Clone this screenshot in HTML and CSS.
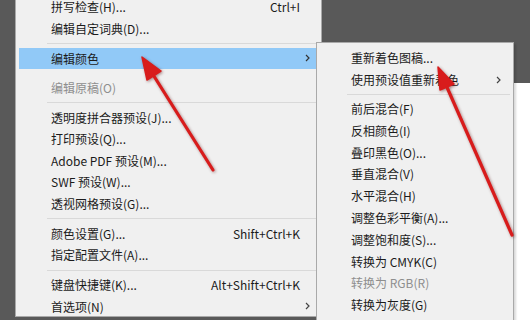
FILE: index.html
```html
<!DOCTYPE html>
<html lang="zh-CN">
<head>
    <meta charset="utf-8">
    <title>编辑菜单</title>
    <link rel="stylesheet" href="styles.css">
</head>
<body>
    <div class="desk">
        <div class="gutter"></div>

        <ul class="menu">
            <li class="item"><span class="label">拼写检查(H)...</span><span class="keys">Ctrl+I</span><span class="more"></span></li>
            <li class="item"><span class="label">编辑自定词典(D)...</span><span class="keys"></span><span class="more"></span></li>
            <li class="sep"></li>
            <li class="item valgt"><span class="label">编辑颜色</span><span class="keys"></span><span class="more"><svg width="5" height="8" viewBox="0 0 5 8"><path d="M1 1l3 3-3 3" fill="none" stroke="#333" stroke-width="1.2"/></svg></span></li>
            <li class="item off gap"><span class="label">编辑原稿(O)</span><span class="keys"></span><span class="more"></span></li>
            <li class="sep"></li>
            <li class="item"><span class="label">透明度拼合器预设(J)...</span><span class="keys"></span><span class="more"></span></li>
            <li class="item"><span class="label">打印预设(Q)...</span><span class="keys"></span><span class="more"></span></li>
            <li class="item"><span class="label">Adobe PDF 预设(M)...</span><span class="keys"></span><span class="more"></span></li>
            <li class="item"><span class="label">SWF 预设(W)...</span><span class="keys"></span><span class="more"></span></li>
            <li class="item"><span class="label">透视网格预设(G)...</span><span class="keys"></span><span class="more"></span></li>
            <li class="sep"></li>
            <li class="item"><span class="label">颜色设置(G)...</span><span class="keys">Shift+Ctrl+K</span><span class="more"></span></li>
            <li class="item"><span class="label">指定配置文件(A)...</span><span class="keys"></span><span class="more"></span></li>
            <li class="sep"></li>
            <li class="item"><span class="label">键盘快捷键(K)...</span><span class="keys">Alt+Shift+Ctrl+K</span><span class="more"></span></li>
            <li class="item"><span class="label">首选项(N)</span><span class="keys"></span><span class="more"><svg width="5" height="8" viewBox="0 0 5 8"><path d="M1 1l3 3-3 3" fill="none" stroke="#444" stroke-width="1.2"/></svg></span></li>
        </ul>

        <div class="doc">
            <div class="doc_top"></div>
            <div class="doc_page"></div>
        </div>
    </div>

    <ul class="menu sub">
        <li class="item"><span class="label">重新着色图稿...</span><span class="keys"></span><span class="more"></span></li>
        <li class="item"><span class="label">使用预设值重新着色</span><span class="keys"></span><span class="more"><svg width="5" height="8" viewBox="0 0 5 8"><path d="M1 1l3 3-3 3" fill="none" stroke="#444" stroke-width="1.2"/></svg></span></li>
        <li class="sep"></li>
        <li class="item"><span class="label">前后混合(F)</span><span class="keys"></span><span class="more"></span></li>
        <li class="item"><span class="label">反相颜色(I)</span><span class="keys"></span><span class="more"></span></li>
        <li class="item"><span class="label">叠印黑色(O)...</span><span class="keys"></span><span class="more"></span></li>
        <li class="item"><span class="label">垂直混合(V)</span><span class="keys"></span><span class="more"></span></li>
        <li class="item"><span class="label">水平混合(H)</span><span class="keys"></span><span class="more"></span></li>
        <li class="item"><span class="label">调整色彩平衡(A)...</span><span class="keys"></span><span class="more"></span></li>
        <li class="item"><span class="label">调整饱和度(S)...</span><span class="keys"></span><span class="more"></span></li>
        <li class="item"><span class="label">转换为 CMYK(C)</span><span class="keys"></span><span class="more"></span></li>
        <li class="item off"><span class="label">转换为 RGB(R)</span><span class="keys"></span><span class="more"></span></li>
        <li class="item"><span class="label">转换为灰度(G)</span><span class="keys"></span><span class="more"></span></li>
    </ul>

    <!-- red arrows drawn over the screenshot -->
    <svg class="pile" width="530" height="320" viewBox="0 0 530 320">
        <g fill="#d81c1c" stroke="#d81c1c" stroke-linejoin="round">
            <line x1="213" y1="170" x2="152" y2="73" stroke-width="3.2" stroke-linecap="round"/>
            <polygon points="142,57 147,80 161,71" stroke-width="1.5"/>
            <line x1="512" y1="235" x2="446" y2="85" stroke-width="3.2" stroke-linecap="round"/>
            <polygon points="438,67 440,90 454,84" stroke-width="1.5"/>
        </g>
    </svg>
</body>
</html>
```

FILE: styles.css
```css
* {
    box-sizing: border-box;
}

body {
    margin: 0;
    width: 530px;
    height: 320px;
    overflow: hidden;
    position: relative;
    background-color: #595959;
    font-family: "Noto Sans CJK SC", "Noto Sans", sans-serif;
    font-size: 12px;
    color: #1b1b1b;
}

ul {
    list-style: none;
    margin: 0;
}

.desk {
    display: flex;
    height: 320px;
}

.gutter {
    width: 15px;
    flex: none;
}

.menu {
    width: 307px;
    flex: none;
    margin-top: -9px;
    height: 326px;
    padding: 4px 3px;
    background: #f0f0f0;
    border: 1px solid #a9a9a9;
}

.item {
    display: grid;
    grid-template-columns: 1fr auto 18px;
    align-items: center;
    height: 21.5px;
    padding-left: 32px;
    white-space: nowrap;
}

.item .keys {
    text-align: right;
}

.item .more {
    display: flex;
    align-items: center;
    padding-left: 5px;
}

.valgt {
    background: #91c9f7;
    height: 21px;
}

.off {
    color: #8e8e8e;
}

.gap {
    margin-top: 8px;
}

.sep {
    height: 8.5px;
    margin-left: 28px;
    background: linear-gradient(#d9d9d9, #d9d9d9) no-repeat 0 4px / 100% 1px;
}

.doc {
    flex: 1;
    display: flex;
    flex-direction: column;
}

.doc_top {
    flex: none;
    height: 83px;
    background: #595959;
}

.doc_page {
    flex: 1;
    background: #ffffff;
}

.sub {
    position: absolute;
    left: 316px;
    top: 42px;
    width: 198px;
    height: 279px;
    margin: 0;
    padding: 4px 3px 2px;
    box-shadow: 2px 2px 2px rgba(0, 0, 0, 0.15);
}

.sub .item {
    height: 21.8px;
    padding-left: 31px;
    grid-template-columns: 1fr 14px;
}

.sub .item .keys {
    display: none;
}

.sub .item .more {
    padding-left: 0;
}

.sub .sep {
    height: 7px;
    margin-left: 27px;
    background-position: 0 3px;
}

.pile {
    position: absolute;
    left: 0;
    top: 0;
    pointer-events: none;
    filter: drop-shadow(1px 1px 1.5px rgba(80, 0, 0, 0.45));
}
```
